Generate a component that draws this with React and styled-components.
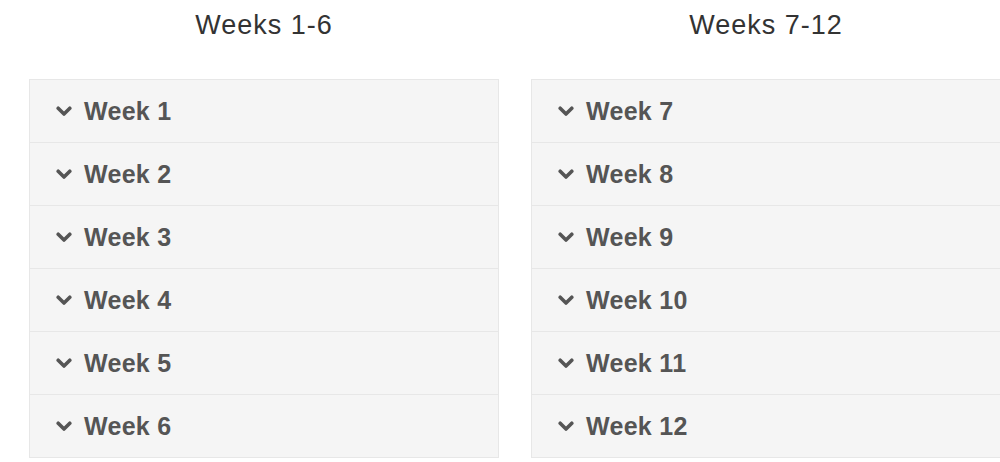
import React from 'react';
import styled, { createGlobalStyle } from 'styled-components';

const GlobalStyle = createGlobalStyle`
  body {
    margin: 0;
    background: #fff;
    font-family: "Liberation Sans", Arial, sans-serif;
  }
`;

const Page = styled.div`
  display: grid;
  grid-template-columns: 470px 470px;
  column-gap: 32px;
  padding-left: 29px;
  width: 1000px;
  height: 462px;
  overflow: hidden;
  box-sizing: border-box;
`;

const Column = styled.div`
  display: flex;
  flex-direction: column;
`;

const Heading = styled.h2`
  margin: 0;
  height: 79px;
  padding-top: 6px;
  box-sizing: border-box;
  text-align: center;
  font-size: 27px;
  font-weight: 400;
  letter-spacing: 1px;
  color: #333;
  line-height: 38px;
`;

const Panel = styled.div`
  border: 1px solid #e7e7e7;
  background: #f5f5f5;
`;

const Row = styled.div`
  display: flex;
  align-items: center;
  gap: 12px;
  height: 62px;
  padding-left: 26px;
  border-top: ${p => (p.first ? 'none' : '1px solid #e7e7e7')};
  font-size: 25px;
  font-weight: 700;
  letter-spacing: 0.3px;
  color: #555;
`;

const Chevron = () => (
  <svg width="16" height="11" viewBox="0 0 16 11">
    <polyline points="2.2,2.2 8,8 13.8,2.2" fill="none" stroke="#555" strokeWidth="3.6" strokeLinecap="round" strokeLinejoin="round" />
  </svg>
);

const groups = [
  { title: 'Weeks 1-6', weeks: [1, 2, 3, 4, 5, 6] },
  { title: 'Weeks 7-12', weeks: [7, 8, 9, 10, 11, 12] },
];

export default function App() {
  return (
    <>
      <GlobalStyle />
      <Page>
        {groups.map(g => (
          <Column key={g.title}>
            <Heading>{g.title}</Heading>
            <Panel>
              {g.weeks.map((w, i) => (
                <Row key={w} first={i === 0}>
                  <Chevron />
                  <span>Week {w}</span>
                </Row>
              ))}
            </Panel>
          </Column>
        ))}
      </Page>
    </>
  );
}
